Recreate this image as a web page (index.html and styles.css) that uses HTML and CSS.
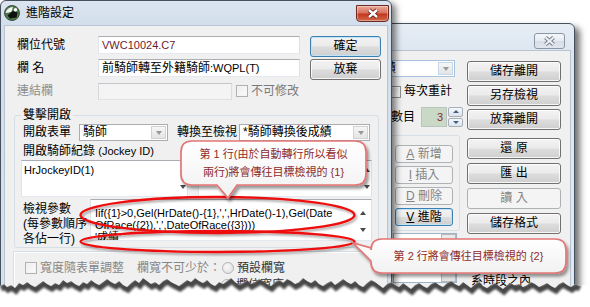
FILE: index.html
```html
<!DOCTYPE html>
<html>
<head>
<meta charset="utf-8">
<link rel="stylesheet" href="styles.css">
</head>
<body>
<div class="stage">

  <div class="win back">
    <div class="titlebar">
      <span class="close grey">
        <svg width="13" height="10" viewBox="0 0 13 10"><path d="M2.5 1.5 L10.5 8.5 M10.5 1.5 L2.5 8.5" stroke="#6f7a88" stroke-width="4"/><path d="M2.5 1.5 L10.5 8.5 M10.5 1.5 L2.5 8.5" stroke="#eef1f4" stroke-width="2.2"/></svg>
      </span>
    </div>
    <div class="client bclient">
      <div class="bleft">
        <div class="combo bcombo"><span class="cval">後成績</span><span class="dd"></span></div>
        <div class="chkrow"><span class="chk"></span><span class="chklbl">每次重計</span></div>
        <div class="spinrow">
          <span class="spinlbl">數目</span>
          <span class="spinfield">3</span>
          <span class="spinbtns"><span class="sb"><i class="up"></i></span><span class="sb"><i class="down"></i></span></span>
        </div>
        <div class="bgroup">
          <button class="btn sm dis"><u>A</u>&nbsp;新增</button>
          <button class="btn sm dis"><u>I</u>&nbsp;插入</button>
          <button class="btn sm dis"><u>D</u>&nbsp;刪除</button>
          <button class="btn sm focus"><u>V</u>&nbsp;進階</button>
        </div>
        <div class="listbox"><div class="lbbody"></div><div class="lbscroll"><span class="lbbtn"></span><span class="lbthumb"></span></div></div>
      </div>
      <div class="bright">
        <div class="bstack">
          <button class="btn wide">儲存離開</button>
          <button class="btn wide">另存檢視</button>
          <button class="btn wide">放棄離開</button>
        </div>
        <div class="bstack second">
          <button class="btn wide">還&nbsp;原</button>
          <button class="btn wide">匯&nbsp;出</button>
          <button class="btn wide dis">讀&nbsp;入</button>
          <button class="btn wide">儲存格式</button>
        </div>
        <div class="btext">系時段之內</div>
      </div>
    </div>
  </div>

  <div class="win front">
    <div class="titlebar">
      <svg class="appicon" viewBox="0 0 16 16"><circle cx="8" cy="8" r="7.5" fill="#4d7a4d"/><path d="M1.5 8 Q3 2.5 9 1.8 L7.5 7 Z" fill="#f4f4f4"/><path d="M3.5 10.5 L8.5 6 L13.5 7.5 L12.5 12.5 L6 13.5 Z" fill="#111"/><circle cx="11.5" cy="4.8" r="1.7" fill="#fff"/><circle cx="8" cy="8" r="7.5" fill="none" stroke="#2c3a2c" stroke-width="0.8"/></svg>
      <span class="title">進階設定</span>
      <span class="close red">
        <svg width="14" height="11" viewBox="0 0 14 11"><path d="M3 2 L11 9 M11 2 L3 9" stroke="#5a1a12" stroke-width="4.2"/><path d="M3 2 L11 9 M11 2 L3 9" stroke="#fff" stroke-width="2.4"/></svg>
      </span>
    </div>
    <div class="client fclient">
      <div class="formgrid">
        <span class="lbl">欄位代號</span>
        <div class="field"><span class="lat code">VWC10024.C7</span></div>
        <button class="btn focus">確定</button>

        <span class="lbl">欄 名</span>
        <div class="field">前騎師轉至外籍騎師<span class="lat">:WQPL(T)</span></div>
        <button class="btn">放棄</button>

        <span class="lbl dim">連結欄</span>
        <div class="linkrow"><div class="field disabled"></div><span class="chk light"></span><span class="dim2">不可修改</span></div>
      </div>

      <fieldset class="group">
        <legend>雙擊開啟</legend>
        <div class="openrow">
          <span class="lbl2">開啟表單</span>
          <div class="combo c1"><span class="cval">騎師</span><span class="dd"></span></div>
          <span class="lbl3">轉換至檢視</span>
          <div class="combo c2"><span class="cval">*騎師轉換後成績</span><span class="dd"></span></div>
        </div>
        <div class="lblline">開啟騎師紀錄 <span class="lat">(Jockey ID)</span></div>
        <div class="tarow">
          <div class="tarea ta1"><div class="tatext lat">HrJockeyID(1)</div><div class="vscroll narrow"><i class="up"></i><i class="down"></i></div></div>
          <div class="tarea ta2"><div class="tatext"></div><div class="vscroll narrow"><i class="up"></i><i class="down"></i></div></div>
        </div>
        <div class="paramrow">
          <div class="plabel">檢視參數<br>(每參數順序<br>各佔一行)</div>
          <div class="tarea ta3">
            <div class="tatext lat">Iif({1}&gt;0,Gel(HrDate()-{1},',',HrDate()-1),Gel(Date<br>OfRace({2}),',',DateOfRace({3})))<br>'成績'</div>
            <div class="vscroll"><i class="up"></i><i class="down"></i></div>
          </div>
        </div>
      </fieldset>

      <div class="group2">
        <div class="optrow">
          <span class="chk light"></span><span class="dim3 w1">寬度隨表單調整</span>
          <span class="dim3 w2">欄寬不可少於：</span>
          <span class="radio"></span><span class="optlbl">預設欄寬</span>
        </div>
        <div class="optrow second">
          <span class="radio"></span><span class="optlbl">欄位寬度</span>
        </div>
      </div>
    </div>
  </div>

  <svg class="ellipses" width="300" height="70" viewBox="0 0 300 70">
    <defs><filter id="es" x="-10%" y="-30%" width="120%" height="160%"><feDropShadow dx="1.5" dy="2" stdDeviation="1.2" flood-color="#000" flood-opacity="0.35"/></filter></defs>
    <g filter="url(#es)" fill="none" stroke="#ee0a0a" stroke-width="2.3">
      <ellipse cx="147.5" cy="27" rx="137" ry="18"/>
      <ellipse cx="147.5" cy="53.5" rx="137" ry="10.5"/>
    </g>
  </svg>

  <div class="callout c-one">
    <svg class="cbg" width="194" height="66" viewBox="0 0 194 66">
      <defs>
        <linearGradient id="cg1" x1="0" y1="0" x2="0" y2="1"><stop offset="0" stop-color="#ffffff"/><stop offset="1" stop-color="#f1f1f1"/></linearGradient>
        <filter id="cs1" x="-10%" y="-20%" width="130%" height="150%"><feDropShadow dx="2" dy="3" stdDeviation="1.8" flood-color="#000" flood-opacity="0.4"/></filter>
      </defs>
      <path filter="url(#cs1)" fill="url(#cg1)" stroke="#e27676" stroke-width="1.7" d="M14,2 H177 Q188,2 188,13 V35 Q188,46 177,46 H59 L50,59 L39,46 H14 Q3,46 3,35 V13 Q3,2 14,2 Z"/>
    </svg>
    <div class="ctext t1">第 1 行(由於自動轉行所以看似<br>兩行)將會傳往目標檢視的 {1}</div>
  </div>

  <div class="callout c-two">
    <svg class="cbg" width="222" height="44" viewBox="0 0 222 44">
      <defs>
        <linearGradient id="cg2" x1="0" y1="0" x2="0" y2="1"><stop offset="0" stop-color="#ffffff"/><stop offset="1" stop-color="#f1f1f1"/></linearGradient>
        <filter id="cs2" x="-10%" y="-20%" width="130%" height="160%"><feDropShadow dx="2" dy="3" stdDeviation="1.8" flood-color="#000" flood-opacity="0.4"/></filter>
      </defs>
      <path filter="url(#cs2)" fill="url(#cg2)" stroke="#e27676" stroke-width="1.7" d="M32,3 H205 Q216,3 216,14 V26 Q216,37 205,37 H32 Q21,37 21,26 V25 L3,7 L21,12 V14 Q21,3 32,3 Z"/>
    </svg>
    <div class="ctext t2">第 2 行將會傳往目標檢視的 {2}</div>
  </div>

  <svg class="torn" width="590" height="41" viewBox="0 0 590 41">
    <defs>
      <clipPath id="below"><path d="M0,41 L0,20 4,18 7,21 11,19 15,22 19,17 23,19 27,16 31,19 35,21 39,18 43,15 47,18 51,20 55,17 59,19 63,14 67,17 71,15 75,18 79,20 83,16 87,18 91,14 95,17 99,19 103,16 107,13 111,16 115,18 119,15 123,19 127,21 131,17 135,14 139,17 143,12 147,15 151,18 155,16 159,19 163,15 167,13 171,16 175,18 179,20 183,17 187,14 191,16 195,12 199,15 203,17 207,14 211,18 215,20 219,16 223,18 227,15 231,12 235,16 239,19 243,17 247,14 251,18 255,16 259,13 263,15 267,18 271,20 275,16 279,14 283,17 287,13 291,15 295,18 299,16 303,12 307,15 311,17 315,14 319,18 323,20 327,17 331,15 335,19 339,16 343,13 347,16 351,18 355,15 359,19 363,21 367,17 371,14 375,16 379,19 383,22 387,18 391,16 395,19 399,21 403,17 407,20 411,23 415,19 419,17 423,20 427,22 431,18 435,16 439,19 443,21 447,17 451,15 455,18 459,20 463,16 467,19 471,22 475,18 479,16 483,20 487,22 491,19 495,17 499,20 503,23 507,19 511,17 515,20 519,18 523,21 527,19 531,16 535,18 539,21 543,19 547,17 551,20 555,22 559,18 563,16 567,19 571,21 575,18 579,20 583,19 590,19 590,41 Z"/></clipPath>
      <filter id="tb" x="-5%" y="-50%" width="110%" height="200%"><feGaussianBlur stdDeviation="1.3"/></filter>
    </defs>
    <rect x="0" y="0" width="590" height="41" fill="#fff" clip-path="url(#below)"/>
    <g clip-path="url(#below)">
      <polyline filter="url(#tb)" transform="translate(1,2.5)" fill="none" stroke="#474747" stroke-width="6" points="0,20 4,18 7,21 11,19 15,22 19,17 23,19 27,16 31,19 35,21 39,18 43,15 47,18 51,20 55,17 59,19 63,14 67,17 71,15 75,18 79,20 83,16 87,18 91,14 95,17 99,19 103,16 107,13 111,16 115,18 119,15 123,19 127,21 131,17 135,14 139,17 143,12 147,15 151,18 155,16 159,19 163,15 167,13 171,16 175,18 179,20 183,17 187,14 191,16 195,12 199,15 203,17 207,14 211,18 215,20 219,16 223,18 227,15 231,12 235,16 239,19 243,17 247,14 251,18 255,16 259,13 263,15 267,18 271,20 275,16 279,14 283,17 287,13 291,15 295,18 299,16 303,12 307,15 311,17 315,14 319,18 323,20 327,17 331,15 335,19 339,16 343,13 347,16 351,18 355,15 359,19 363,21 367,17 371,14 375,16 379,19 383,22 387,18 391,16 395,19 399,21 403,17 407,20 411,23 415,19 419,17 423,20 427,22 431,18 435,16 439,19 443,21 447,17 451,15 455,18 459,20 463,16 467,19 471,22 475,18 479,16 483,20 487,22 491,19 495,17 499,20 503,23 507,19 511,17 515,20 519,18 523,21 527,19 531,16 535,18 539,21 543,19 547,17 551,20 555,22 559,18 563,16 567,19 571,21 575,18 579,20"/>
    </g>
  </svg>

</div>
</body>
</html>
```

FILE: styles.css
```css
* { box-sizing: border-box; margin: 0; padding: 0; }
html, body { width: 590px; height: 307px; overflow: hidden; background: #fff; }
body {
  font-family: "Liberation Sans", "Noto Sans CJK TC", sans-serif;
  font-size: 12px;
  line-height: 15px;
  color: #000;
}
.stage { position: relative; width: 590px; height: 307px; overflow: hidden; }
.lat { font-size: 11px; }
button { font: inherit; color: inherit; }

/* ---------- windows ---------- */
.win {
  position: absolute;
  display: flex;
  flex-direction: column;
  border: 1px solid #46515d;
  border-radius: 6px 6px 0 0;
  padding: 0 3px 3px;
}
.front {
  left: 0; top: 0; width: 392px; height: 330px;
  background: linear-gradient(#dbe5f1, #d2deeb 26px, #d6e1ed);
  box-shadow: 4px 3px 6px rgba(0,0,0,.5);
  z-index: 2;
}
.back {
  left: 340px; top: 23px; width: 235px; height: 300px;
  background: linear-gradient(#e6edf5, #dde6f0 28px, #e1e8f1);
  box-shadow: 5px 4px 6px rgba(0,0,0,.55);
  z-index: 1;
}
.titlebar { display: flex; align-items: center; flex: none; }
.front .titlebar { height: 24px; }
.back .titlebar { height: 26px; align-items: flex-start; }
.appicon { width: 16px; height: 16px; flex: none; }
.title { margin-left: 6px; line-height: 16px; }
.close { margin-left: auto; display: flex; align-items: center; justify-content: center; }
.close.red {
  align-self: flex-start;
  margin-top: 4px; margin-right: -1px;
  width: 33px; height: 17px;
  border: 1px solid #6d2a20;
  border-radius: 0 0 4px 4px;
  background: linear-gradient(#eaa999, #d9735e 45%, #c3391f 55%, #d0694a);
  box-shadow: inset 0 0 0 1px rgba(255,255,255,.35);
}
.close.grey {
  margin-top: 9px; margin-right: 6px;
  width: 31px; height: 16px;
  border: 1px solid #8a96a6;
  border-radius: 3px;
  background: linear-gradient(#f5f7fa, #e6ebf0 50%, #d7dee7 51%, #e0e6ed);
}
.client { flex: 1; background: #f0f0f0; border: 1px solid #b8c4d1; }

/* ---------- common controls ---------- */
.btn {
  display: flex; align-items: center; justify-content: center;
  height: 21px;
  border: 1px solid #707070;
  border-radius: 3px;
  background: linear-gradient(#f3f3f3, #ebebeb 48%, #dddddd 52%, #cfcfcf);
  box-shadow: inset 0 0 0 1px rgba(255,255,255,.8);
  line-height: 15px;
  white-space: nowrap;
}
.btn u { text-decoration: underline; }
.btn.focus {
  border-color: #3c7fb1;
  box-shadow: inset 0 0 0 1px #c2e4f6;
}
.btn.dis {
  border-color: #adb2b5;
  background: #f4f4f4;
  color: #838383;
  box-shadow: none;
}
.field {
  display: flex; align-items: center;
  width: 202px; height: 18px;
  border: 1px solid;
  border-color: #abadb3 #dbdfe6 #e3e9ef #e2e3ea;
  background: #fff;
  padding-left: 3px;
  white-space: nowrap; overflow: hidden;
}
.field.disabled { width: 134px; height: 17px; background: #f4f4f4; border-color: #c3c6ca #dadcdf #dfe1e4 #d6d8db; }
.code { color: #6b1d2b; }
.chk {
  display: inline-block; flex: none;
  width: 12px; height: 12px;
  border: 1px solid #8e8f8f;
  background: linear-gradient(135deg, #dcdcdc, #ffffff);
  box-shadow: inset 0 0 0 1px #f4f4f4;
}
.chk.light { border-color: #b1b1b1; background: linear-gradient(135deg, #ececec, #fdfdfd); }
.radio {
  display: inline-block; flex: none;
  width: 12px; height: 12px; border-radius: 50%;
  border: 1px solid #b5b5b5;
  background: radial-gradient(circle at 40% 40%, #fafafa, #dadada);
}
.combo {
  display: flex; align-items: stretch;
  height: 17px;
  border: 1px solid #abadb3;
  background: #fff;
}
.cval { flex: 1; padding-left: 3px; line-height: 15px; white-space: nowrap; overflow: hidden; }
.dd {
  flex: none; width: 15px; margin: 1px;
  border: 1px solid #d2d2d2;
  background: linear-gradient(#f6f6f6, #e4e4e4);
  display: flex; align-items: center; justify-content: center;
}
.dd::after {
  content: ""; display: block;
  border-left: 3.5px solid transparent;
  border-right: 3.5px solid transparent;
  border-top: 4px solid #999;
}
i.up, i.down { display: block; width: 0; height: 0; border-left: 3.5px solid transparent; border-right: 3.5px solid transparent; }
i.up { border-bottom: 4px solid #4a4a4a; }
i.down { border-top: 4px solid #4a4a4a; }

/* ---------- front dialog ---------- */
.fclient { padding-top: 10px; }
.formgrid {
  display: grid;
  grid-template-columns: 81px 212px 71px;
  grid-template-rows: 21px 21px 18px;
  row-gap: 2px;
  padding-left: 12px;
}
.lbl { line-height: 18px; align-self: start; white-space: nowrap; }
.lbl.dim { color: #8d8d8d; }
.linkrow { display: flex; align-items: center; grid-column: 2 / 4; }
.linkrow .chk { margin-left: 4px; }
.dim2 { margin-left: 3px; color: #7a7a7a; }

.group {
  margin: 8px 8px 0 9px;
  border: 1px solid #d5dfe5;
  border-radius: 3px;
  padding: 0 6px 6px;
}
.group legend { padding: 0 2px; line-height: 15px; }
.openrow { display: flex; align-items: center; height: 17px; margin-top: 1px; }
.lbl2 { width: 48px; margin-left: 2px; white-space: nowrap; }
.c1 { width: 89px; margin-left: 8px; }
.lbl3 { width: 60px; margin-left: 9px; white-space: nowrap; }
.c2 { width: 131px; margin-left: 2px; }
.lblline { height: 16px; margin: 3px 0 0 2px; line-height: 15px; white-space: nowrap; }
.tarow { display: flex; gap: 10px; height: 37px; }
.tarea {
  display: flex;
  border: 1px solid;
  border-color: #abadb3 #dbdfe6 #e3e9ef #e2e3ea;
  background: #fff;
  overflow: hidden;
}
.ta1 { width: 167px; }
.ta2 { width: 174px; }
.tatext { flex: 1; line-height: 12px; white-space: nowrap; overflow: hidden; }
.ta1 .tatext { padding: 3px 0 0 2px; }
.vscroll { flex: none; width: 17px; display: flex; flex-direction: column; justify-content: space-between; align-items: center; padding: 11px 0 8px; }
.vscroll.narrow { width: 9px; padding: 7px 0 7px; }
.paramrow { display: flex; height: 42px; margin-top: 2px; }
.plabel { width: 67px; margin-left: 2px; padding-top: 3px; line-height: 15px; white-space: nowrap; position: relative; z-index: 1; }
.ta3 { width: 282px; }
.ta3 .tatext { padding: 7px 0 0 4px; }

.group2 {
  margin: 3px 0 0 8px;
  border-top: 1px solid #d5dfe5;
  border-left: 1px solid #d5dfe5;
  box-shadow: inset 1px 1px 0 #fff;
  padding: 10px 0 0 11px;
}
.optrow { display: flex; align-items: center; height: 12px; }
.optrow.second { margin-top: 5px; padding-left: 196px; }
.dim3 { color: #878787; white-space: nowrap; }
.w1 { margin-left: 3px; width: 84px; }
.w2 { margin-left: 13px; width: 85px; }
.optlbl { margin-left: 3px; color: #333; white-space: nowrap; }

/* ---------- back window ---------- */
.bclient { display: flex; padding-right: 9px; }
.bleft { width: 118px; display: flex; flex-direction: column; padding-top: 9px; flex: none; }
.bright { width: 94px; margin-left: 4px; display: flex; flex-direction: column; padding-top: 10px; flex: none; }
.bcombo { width: 110px; border-color: #a9c3de; }
.bcombo .cval { padding-left: 14px; }
.bcombo .dd { border-color: #c5d7ea; }
.chkrow { display: flex; align-items: center; height: 13px; margin: 8px 0 0 44px; }
.chklbl { margin-left: 3px; white-space: nowrap; }
.spinrow { display: flex; align-items: center; height: 20px; margin: 9px 0 0 46px; }
.spinlbl { width: 24px; white-space: nowrap; }
.spinfield {
  width: 26px; height: 20px; margin-left: 6px;
  border: 1px solid #b9c3c0;
  background: #c9d9c5;
  text-align: right; padding-right: 3px;
  font-size: 11px; line-height: 18px; color: #8a2a2a;
}
.spinbtns { width: 15px; height: 20px; margin-left: 1px; display: flex; flex-direction: column; gap: 1px; }
.sb {
  flex: 1; border: 1px solid #a6afba; border-radius: 2px;
  background: linear-gradient(#f6f8fa, #dde3ea);
  display: flex; align-items: center; justify-content: center;
}
.sb i.up { border-bottom-color: #3f5e86; border-left-width: 3px; border-right-width: 3px; border-bottom-width: 3px; }
.sb i.down { border-top-color: #3f5e86; border-left-width: 3px; border-right-width: 3px; border-top-width: 3px; }
.bgroup {
  margin: 8px 3px 0 5px;
  border: 1px solid #d5dfe5;
  border-radius: 3px;
  padding: 9px 6px 4px;
  display: flex; flex-direction: column; align-items: flex-end; gap: 3px;
}
.btn.sm { width: 58px; height: 18px; }
.listbox {
  display: flex;
  width: 64px; height: 50px;
  margin: 2px 0 0 48px;
  border: 1px solid #9fb3c9;
  background: #fff;
}
.lbbody { flex: 1; }
.lbscroll { width: 15px; display: flex; flex-direction: column; justify-content: space-between; background: #f4f4f4; }
.lbbtn { height: 11px; border: 1px solid #b8b8b8; background: #eaeaea; }
.lbthumb { height: 17px; border: 1px solid #b8b8b8; background: #e4e4e4; }
.bstack { display: flex; flex-direction: column; gap: 3px; }
.bstack.second { margin-top: 8px; gap: 4px; }
.btn.wide { width: 94px; height: 21px; }
.btext { margin: 40px 0 0 4px; white-space: nowrap; }

/* ---------- overlays ---------- */
.ellipses { position: absolute; left: 70px; top: 188px; z-index: 5; }
.callout { position: absolute; z-index: 6; }
.c-one { left: 178px; top: 139px; width: 194px; height: 66px; }
.c-two { left: 350px; top: 236px; width: 222px; height: 44px; }
.cbg { position: absolute; left: 0; top: 0; }
.ctext {
  position: absolute;
  display: flex; align-items: center; justify-content: center;
  text-align: center;
  font-size: 11px; line-height: 18px;
  color: #8d2b2b;
  white-space: nowrap;
}
.t1 { left: 3px; top: 2px; width: 185px; height: 44px; }
.t2 { left: 21px; top: 3px; width: 195px; height: 34px; }
.torn { position: absolute; left: 0; top: 266px; z-index: 10; }
```
